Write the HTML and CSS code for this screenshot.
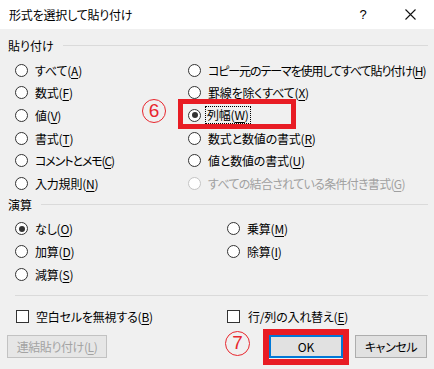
FILE: index.html
```html
<!DOCTYPE html>
<html>
<head>
    <title>形式を選択して貼り付け</title>
    <link rel="stylesheet" href="styles.css">
</head>
<body>
    <div class="dialog">
        <div class="titlebar">
            <span class="title">形式を選択して貼り付け</span>
            <span class="help">?</span>
            <svg class="close" width="11" height="11" viewBox="0 0 11 11"><path d="M0.5 0.5L10.5 10.5M10.5 0.5L0.5 10.5" stroke="#111" stroke-width="1.1" fill="none"/></svg>
        </div>

        <div class="content">
            <div class="group"><span>貼り付け</span><i class="rule"></i></div>
            <div class="options paste">
                <div class="opt"><span class="radio"></span>すべて(<u>A</u>)</div>
                <div class="opt kana"><span class="radio"></span>コピー元のテーマを使用してすべて貼り付け(<u>H</u>)</div>
                <div class="opt"><span class="radio"></span>数式(<u>F</u>)</div>
                <div class="opt"><span class="radio"></span>罫線を除くすべて(<u>X</u>)</div>
                <div class="opt"><span class="radio"></span>値(<u>V</u>)</div>
                <div class="opt marked">
                    <span class="radio checked"></span><span class="focus">列幅(<u>W</u>)</span>
                    <span class="num num-6">6</span>
                    <span class="redbox"></span>
                </div>
                <div class="opt"><span class="radio"></span>書式(<u>T</u>)</div>
                <div class="opt"><span class="radio"></span>数式と数値の書式(<u>R</u>)</div>
                <div class="opt kana"><span class="radio"></span>コメントとメモ(<u>C</u>)</div>
                <div class="opt"><span class="radio"></span>値と数値の書式(<u>U</u>)</div>
                <div class="opt"><span class="radio"></span>入力規則(<u>N</u>)</div>
                <div class="opt disabled"><span class="radio"></span>すべての結合されている条件付き書式(<u>G</u>)</div>
            </div>

            <div class="group group-op"><span>演算</span><i class="rule"></i></div>
            <div class="options ops">
                <div class="opt"><span class="radio checked"></span>なし(<u>O</u>)</div>
                <div class="opt"><span class="radio"></span>乗算(<u>M</u>)</div>
                <div class="opt"><span class="radio"></span>加算(<u>D</u>)</div>
                <div class="opt"><span class="radio"></span>除算(<u>I</u>)</div>
                <div class="opt"><span class="radio"></span>減算(<u>S</u>)</div>
            </div>

            <i class="separator"></i>

            <div class="options checks">
                <div class="opt"><span class="check"></span>空白セルを無視する(<u>B</u>)</div>
                <div class="opt"><span class="check"></span>行/列の入れ替え(<u>E</u>)</div>
            </div>

            <div class="buttons">
                <button class="btn btn-link" disabled>連結貼り付け(<u>L</u>)</button>
                <div class="ok-wrap">
                    <span class="num num-7">7</span>
                    <button class="btn btn-ok">OK</button>
                    <span class="redframe"></span>
                </div>
                <button class="btn btn-cancel">キャンセル</button>
            </div>
        </div>
    </div>
</body>
</html>
```

FILE: styles.css
```css
body { margin: 0; background: #f0f0f0; font-family: "Noto Sans CJK JP", "Liberation Sans", sans-serif; font-size: 12px; color: #000; font-feature-settings: "palt"; }
u { text-decoration: underline; text-underline-offset: 2px; }

.dialog { width: 434px; height: 369px; background: #f0f0f0; overflow: hidden; }

.titlebar { height: 29px; background: #fff; display: flex; align-items: center; padding: 0 18px 0 9px; box-sizing: border-box; }
.title { flex: 1; font-size: 12px; letter-spacing: -0.2px; }
.help { width: 12px; margin-right: 36px; font-family: "Liberation Sans", sans-serif; font-size: 13px; text-align: center; }
.close { display: block; }

.content { padding: 7px 6px 0 8px; }

.group { height: 18px; display: flex; align-items: center; gap: 9px; margin-bottom: 5px; }
.group-op { margin-top: 1.4px; margin-bottom: 3.5px; }
.rule { flex: 1; height: 1px; background: #dadada; }

.options { margin-left: 7px; display: grid; }
.paste { grid-template-columns: 173px 1fr; grid-auto-rows: 22.6px; }
.ops { grid-template-columns: 212px 1fr; grid-auto-rows: 23px; }
.checks { grid-template-columns: 212px 1fr; grid-auto-rows: 20px; margin-top: 10.5px; }

.opt { display: flex; align-items: center; white-space: nowrap; letter-spacing: -0.2px; }
.opt.kana { letter-spacing: -1.1px; }
.opt.disabled { color: #a0a0a0; letter-spacing: -0.7px; }

.radio { width: 13px; height: 13px; box-sizing: border-box; border: 1px solid #333; border-radius: 50%; background: #fff; margin-right: 7px; flex: none; display: flex; align-items: center; justify-content: center; }
.radio.checked::after { content: ""; width: 6px; height: 6px; border-radius: 50%; background: #333; }
.disabled .radio { border-color: #c4c4c4; }

.check { width: 13px; height: 13px; box-sizing: border-box; border: 1px solid #333; background: #fff; margin-right: 8px; flex: none; }
.checks .opt:first-child .check { margin-left: 1px; margin-right: 7px; }

.focus { outline: 1px dotted #000; outline-offset: 0; padding: 0 1px; margin-left: -2px; line-height: 16px; }

.marked { position: relative; }
.redbox { position: absolute; left: -10px; top: -5.2px; width: 118px; height: 30px; box-sizing: border-box; border: 5px solid #e81c24; }

.num { position: absolute; width: 24px; height: 24px; box-sizing: border-box; border: 1.6px solid #e8262d; border-radius: 50%; color: #e8262d; font-family: "Liberation Sans", sans-serif; font-size: 19px; line-height: 21px; text-align: center; letter-spacing: 0; }
.num-6 { left: -46px; top: -5px; }
.num-7 { left: -44px; top: -4px; width: 25px; height: 25px; line-height: 22px; }

.separator { display: block; height: 1px; background: #dadada; margin: 8.5px 0 0 7px; }

.buttons { display: flex; align-items: center; margin-top: 8.5px; margin-left: -1px; }
.btn { height: 23px; box-sizing: border-box; border: 1px solid #adadad; background: #e1e1e1; font-family: inherit; font-size: 12px; color: #000; padding: 0; font-feature-settings: "palt"; letter-spacing: -0.4px; }
.btn-link { width: 100px; background: #e6e6e6; border-color: #c2c2c2; color: #a3a3a3; margin-right: 162px; }
.ok-wrap { position: relative; margin-right: 12px; }
.btn-ok { width: 74px; display: block; border: 2px solid #0078d7; letter-spacing: 0; }
.redframe { position: absolute; left: -6px; top: -6px; right: -6px; bottom: -7px; border: 6px solid #e81c24; }
.btn-cancel { width: 72px; }
```
